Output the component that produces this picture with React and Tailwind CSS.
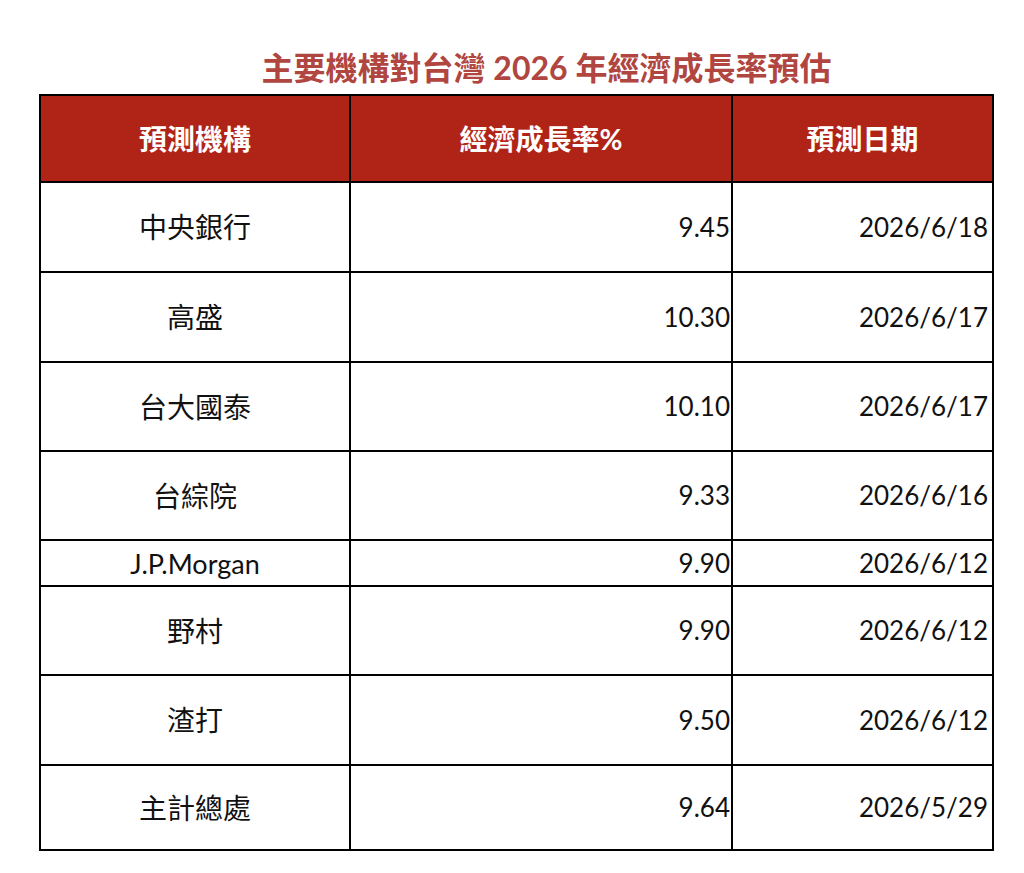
const rows = [
  { org: "中央銀行", rate: "9.45", date: "2026/6/18", h: "h-[90px]" },
  { org: "高盛", rate: "10.30", date: "2026/6/17", h: "h-[90px]" },
  { org: "台大國泰", rate: "10.10", date: "2026/6/17", h: "h-[89px]" },
  { org: "台綜院", rate: "9.33", date: "2026/6/16", h: "h-[89px]" },
  { org: "J.P.Morgan", rate: "9.90", date: "2026/6/12", h: "h-[46px]" },
  { org: "野村", rate: "9.90", date: "2026/6/12", h: "h-[89px]" },
  { org: "渣打", rate: "9.50", date: "2026/6/12", h: "h-[90px]" },
  { org: "主計總處", rate: "9.64", date: "2026/5/29", h: "h-[85px]" },
];

const cjk = "font-['Lato','Noto_Sans_CJK_TC',sans-serif]";

const App = () => {
  return (
    <div className={`min-h-screen bg-white pt-[52px] pl-[39px] ${cjk}`}>
      <div className="w-[953px]">
        <h1 className="pl-[62px] text-center text-[32px] leading-none font-bold text-[#b0463f] mb-[10px]">
          主要機構對台灣 2026 年經濟成長率預估
        </h1>

        <table className="w-[953px] table-fixed border-collapse border-2 border-black">
          <colgroup>
            <col className="w-[310px]" />
            <col className="w-[382px]" />
            <col className="w-[261px]" />
          </colgroup>
          <thead>
            <tr className="h-[87px] bg-[#b02418] text-white text-[28px] font-bold">
              <th className="border-2 border-black text-center">預測機構</th>
              <th className="border-2 border-black text-center">經濟成長率%</th>
              <th className="border-2 border-black text-center">預測日期</th>
            </tr>
          </thead>
          <tbody className="text-[#111] text-[28px]">
            {rows.map((r) => (
              <tr key={r.org} className={r.h}>
                <td className="border-2 border-black text-center p-0">
                  {r.org.startsWith("J") ? (
                    <span className="text-[27px] leading-none">{r.org}</span>
                  ) : (
                    r.org
                  )}
                </td>
                <td className="border-2 border-black text-right text-[26px] pr-[1px] p-0">
                  {r.rate}
                </td>
                <td className="border-2 border-black text-right text-[26px] pr-[4px]">
                  {r.date}
                </td>
              </tr>
            ))}
          </tbody>
        </table>
      </div>
    </div>
  );
};

export default App;
